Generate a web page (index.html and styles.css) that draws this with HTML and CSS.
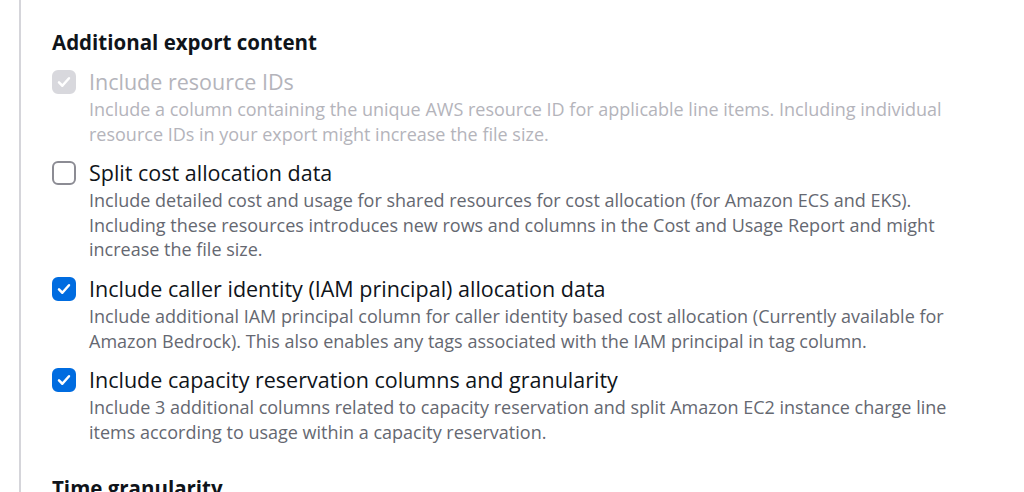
FILE: index.html
```html
<!DOCTYPE html>
<html lang="en">
  <head>
    <meta charset="UTF-8" />
    <title>Additional export content</title>
    <link rel="stylesheet" href="styles.css">
  </head>
  <body>
    <div class="panel">
      <h2>Additional export content</h2>
      <div class="options">
        <label class="option disabled">
          <input type="checkbox" checked disabled />
          <span class="box"><svg viewBox="0 0 24 24"><path d="M6 12.5l4 4 8-9" /></svg></span>
          <span class="text">
            <span class="title">Include resource IDs</span>
            <span class="desc">Include a column containing the unique AWS resource ID for applicable line items. Including individual resource IDs in your export might increase the file size.</span>
          </span>
        </label>
        <label class="option">
          <input type="checkbox" />
          <span class="box"><svg viewBox="0 0 24 24"><path d="M6 12.5l4 4 8-9" /></svg></span>
          <span class="text">
            <span class="title">Split cost allocation data</span>
            <span class="desc">Include detailed cost and usage for shared resources for cost allocation (for Amazon ECS and EKS). Including these resources introduces new rows and columns in the Cost and Usage Report and might increase the file size.</span>
          </span>
        </label>
        <label class="option">
          <input type="checkbox" checked />
          <span class="box"><svg viewBox="0 0 24 24"><path d="M6 12.5l4 4 8-9" /></svg></span>
          <span class="text">
            <span class="title">Include caller identity (IAM principal) allocation data</span>
            <span class="desc">Include additional IAM principal column for caller identity based cost allocation (Currently available for Amazon Bedrock). This also enables any tags associated with the IAM principal in tag column.</span>
          </span>
        </label>
        <label class="option">
          <input type="checkbox" checked />
          <span class="box"><svg viewBox="0 0 24 24"><path d="M6 12.5l4 4 8-9" /></svg></span>
          <span class="text">
            <span class="title">Include capacity reservation columns and granularity</span>
            <span class="desc">Include 3 additional columns related to capacity reservation and split Amazon EC2 instance charge line items according to usage within a capacity reservation.</span>
          </span>
        </label>
      </div>
      <h2 class="next">Time granularity</h2>
    </div>
  </body>
</html>
```
FILE: styles.css
```css
* {
  margin: 0;
  padding: 0;
  box-sizing: border-box;
}

body {
  background: #fff;
  font-family: "Open Sans", "Noto Sans", sans-serif;
  color: #0f141a;
  overflow: hidden;
}

.panel {
  margin-left: 19px;
  border-left: 2px solid #d5d5da;
  padding: 28px 34px 0 31px;
  height: 492px;
  overflow: hidden;
}

h2 {
  font-size: 20.5px;
  line-height: 28px;
  font-weight: 700;
  color: #0f141a;
}

.options {
  margin-top: 11px;
  display: flex;
  flex-direction: column;
  gap: 12px;
}

.option {
  display: flex;
  gap: 13px;
  align-items: flex-start;
}

.option input {
  display: none;
}

.box {
  flex: none;
  width: 24px;
  height: 24px;
  margin-top: 3px;
  border: 2px solid #8c8c94;
  border-radius: 6px;
  background: #fff;
}

.box svg {
  display: none;
  width: 20px;
  height: 20px;
}

.box path {
  fill: none;
  stroke: #fff;
  stroke-width: 3;
  stroke-linecap: round;
  stroke-linejoin: round;
}

.option input:checked + .box {
  background: #006ce0;
  border-color: #006ce0;
}

.option input:checked + .box svg {
  display: block;
}

.option.disabled input:checked + .box {
  background: #d8d8dd;
  border-color: #d8d8dd;
}

.text {
  display: flex;
  flex-direction: column;
}

.title {
  font-size: 21.5px;
  line-height: 30px;
}

.desc {
  font-size: 18px;
  line-height: 24.6px;
  color: #656871;
}

.disabled .title,
.disabled .desc {
  color: #b4b4bb;
}

.next {
  margin-top: 30px;
}
```
